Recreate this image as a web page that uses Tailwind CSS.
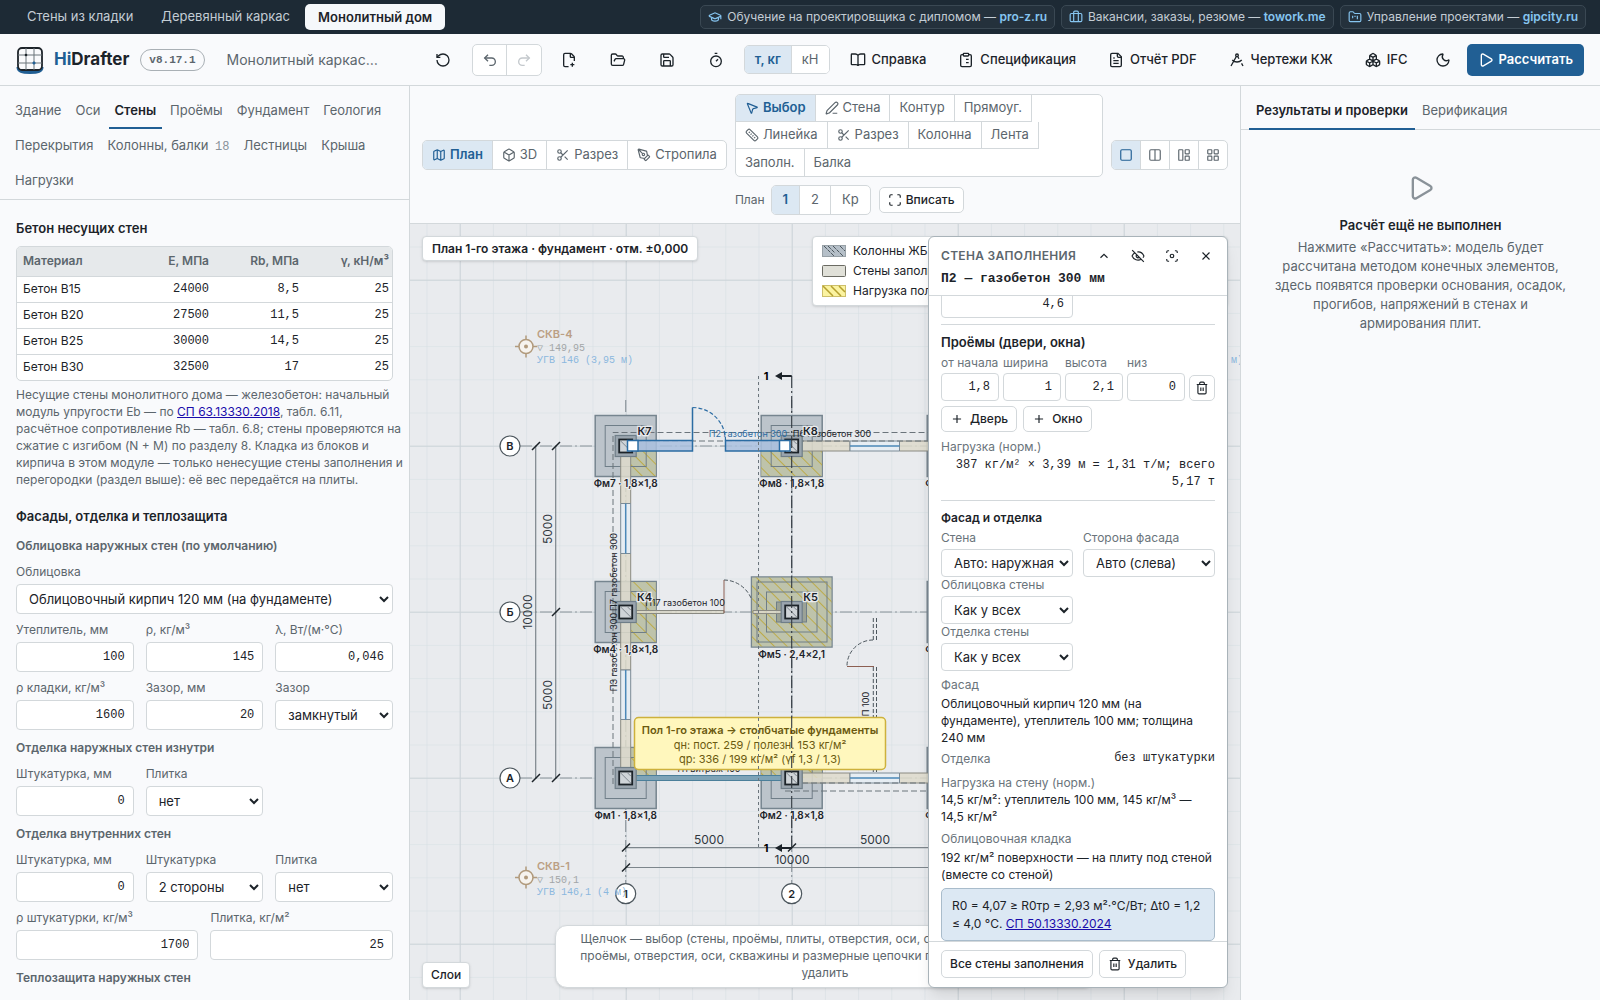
<!DOCTYPE html>
<html lang="ru">
<head>
<meta charset="utf-8">
<title>HiDrafter — Монолитный дом</title>
<script src="https://cdn.jsdelivr.net/npm/@tailwindcss/browser@4"></script>
</head>
<body class="h-screen flex flex-col overflow-hidden bg-[#f9fafc] font-['Inter','Noto_Sans',sans-serif] text-[13px] text-[#1c2329]">

<svg class="hidden" aria-hidden="true">
  <symbol id="rotate" viewBox="0 0 24 24"><path d="M3 12a9 9 0 1 0 9-9 9.75 9.75 0 0 0-6.74 2.74L3 8"/><path d="M3 3v5h5"/></symbol>
  <symbol id="undo" viewBox="0 0 24 24"><path d="M9 14 4 9l5-5"/><path d="M4 9h10.5a5.5 5.5 0 0 1 0 11H11"/></symbol>
  <symbol id="redo" viewBox="0 0 24 24"><path d="m15 14 5-5-5-5"/><path d="M20 9H9.500a5.500 5.500 0 0 0 0 11H13"/></symbol>
  <symbol id="filenew" viewBox="0 0 24 24"><path d="M11.350 22H6a2 2 0 0 1-2-2V4a2 2 0 0 1 2-2h8a2.400 2.400 0 0 1 1.706.706l3.588 3.588A2.400 2.400 0 0 1 20 8v5.350"/><path d="M14 2v5a1 1 0 0 0 1 1h5M14 19h6M17 16v6"/></symbol>
  <symbol id="folder" viewBox="0 0 24 24"><path d="m6 14 1.500-2.900A2 2 0 0 1 9.240 10H20a2 2 0 0 1 1.940 2.500l-1.540 6a2 2 0 0 1-1.950 1.500H4a2 2 0 0 1-2-2V5a2 2 0 0 1 2-2h3.900a2 2 0 0 1 1.690.9l.81 1.200a2 2 0 0 0 1.670.9H18a2 2 0 0 1 2 2v2"/></symbol>
  <symbol id="save" viewBox="0 0 24 24"><path d="M15.200 3a2 2 0 0 1 1.400.6l3.800 3.800a2 2 0 0 1 .6 1.400V19a2 2 0 0 1-2 2H5a2 2 0 0 1-2-2V5a2 2 0 0 1 2-2z"/><path d="M17 21v-7a1 1 0 0 0-1-1H8a1 1 0 0 0-1 1v7M7 3v4a1 1 0 0 0 1 1h7"/></symbol>
  <symbol id="timer" viewBox="0 0 24 24"><path d="M10 2h4M12 14l3-3"/><circle cx="12" cy="14" r="8"/></symbol>
  <symbol id="book" viewBox="0 0 24 24"><path d="M12 5v16M12 5c-1-1.300-2-2-4-2H3a1 1 0 0 0-1 1v14a1 1 0 0 0 1 1h6c2 0 3 1 3 2 0-1 1-2 3-2h6a1 1 0 0 0 1-1V4a1 1 0 0 0-1-1h-5c-2 0-3 .7-4 2"/></symbol>
  <symbol id="clipboard" viewBox="0 0 24 24"><rect x="8" y="2" width="8" height="4" rx="1"/><path d="M16 4h2a2 2 0 0 1 2 2v14a2 2 0 0 1-2 2H6a2 2 0 0 1-2-2V6a2 2 0 0 1 2-2h2M12 11h4M12 16h4M8 11h.01M8 16h.01"/></symbol>
  <symbol id="filetext" viewBox="0 0 24 24"><path d="M15 2H6a2 2 0 0 0-2 2v16a2 2 0 0 0 2 2h12a2 2 0 0 0 2-2V7Z"/><path d="M14 2v4a2 2 0 0 0 2 2h4M10 9H8M16 13H8M16 17H8"/></symbol>
  <symbol id="compass" viewBox="0 0 24 24"><path d="m12.990 6.740 1.930 3.440M19.136 12a10 10 0 0 1-14.271 0M21 21l-2.160-3.840M3 21l8.020-14.260"/><circle cx="12" cy="5" r="2"/></symbol>
  <symbol id="boxes" viewBox="0 0 24 24"><path d="M2.970 12.920A2 2 0 0 0 2 14.630v3.240a2 2 0 0 0 .97 1.710l3 1.800a2 2 0 0 0 2.060 0L12 19v-5.500l-5-3-4.030 2.420ZM7 16.500l-4.740-2.850M7 16.500l5-3M7 16.500v5.170M12 13.500V19l3.970 2.380a2 2 0 0 0 2.060 0l3-1.800a2 2 0 0 0 .97-1.710v-3.240a2 2 0 0 0-.97-1.710L17 10.500l-5 3ZM17 16.500l-5-3M17 16.500l4.740-2.850M17 16.500v5.170M7.970 4.420A2 2 0 0 0 7 6.130v4.370l5 3 5-3V6.130a2 2 0 0 0-.97-1.710l-3-1.800a2 2 0 0 0-2.060 0l-3 1.800ZM12 8 7.260 5.150M12 8l4.740-2.850M12 13.500V8"/></symbol>
  <symbol id="moon" viewBox="0 0 24 24"><path d="M20.985 12.486a9 9 0 1 1-9.473-9.472c.405-.022.617.46.402.803a6 6 0 0 0 8.268 8.268c.344-.215.825-.004.803.401"/></symbol>
  <symbol id="play" viewBox="0 0 24 24"><path d="M5 5a2 2 0 0 1 3.008-1.728l11.997 6.998a2 2 0 0 1 .003 3.458l-12 7A2 2 0 0 1 5 19z"/></symbol>
  <symbol id="map" viewBox="0 0 24 24"><path d="M14.106 5.553a2 2 0 0 0 1.788 0l3.659-1.830A1 1 0 0 1 21 4.619v12.764a1 1 0 0 1-.553.894l-4.553 2.277a2 2 0 0 1-1.788 0l-4.212-2.106a2 2 0 0 0-1.788 0l-3.659 1.830A1 1 0 0 1 3 19.381V6.618a1 1 0 0 1 .553-.894l4.553-2.277a2 2 0 0 1 1.788 0zM15 5.764v15M9 3.236v15"/></symbol>
  <symbol id="box" viewBox="0 0 24 24"><path d="M21 8a2 2 0 0 0-1-1.730l-7-4a2 2 0 0 0-2 0l-7 4A2 2 0 0 0 3 8v8a2 2 0 0 0 1 1.730l7 4a2 2 0 0 0 2 0l7-4A2 2 0 0 0 21 16ZM3.300 7l8.700 5 8.700-5M12 22V12"/></symbol>
  <symbol id="scissors" viewBox="0 0 24 24"><circle cx="6" cy="6" r="3"/><circle cx="6" cy="18" r="3"/><path d="M8.120 8.120 12 12M20 4 8.120 15.880M14.800 14.800 20 20"/></symbol>
  <symbol id="pentool" viewBox="0 0 24 24"><path d="M15.707 21.293a1 1 0 0 1-1.414 0l-1.586-1.586a1 1 0 0 1 0-1.414l5.586-5.586a1 1 0 0 1 1.414 0l1.586 1.586a1 1 0 0 1 0 1.414zM18 13l-1.375-6.874a1 1 0 0 0-.746-.776L3.235 2.028a1 1 0 0 0-1.207 1.207L5.350 15.879a1 1 0 0 0 .776.746L13 18M2.300 2.300l7.286 7.286"/><circle cx="11" cy="11" r="2"/></symbol>
  <symbol id="pointer" viewBox="0 0 24 24"><path d="M4.037 4.688a.495.495 0 0 1 .651-.651l16 6.500a.5.500 0 0 1-.063.947l-6.124 1.580a2 2 0 0 0-1.438 1.435l-1.579 6.126a.5.500 0 0 1-.947.063z"/></symbol>
  <symbol id="pencil" viewBox="0 0 24 24"><path d="M13 21h8M21.174 6.812a1 1 0 0 0-3.986-3.987L3.842 16.174a2 2 0 0 0-.5.830l-1.321 4.352a.5.500 0 0 0 .623.622l4.353-1.320a2 2 0 0 0 .830-.497z"/></symbol>
  <symbol id="ruler" viewBox="0 0 24 24"><path d="M8.700 2.700a2.400 2.400 0 0 0-3.400 0L2.700 5.300a2.400 2.400 0 0 0 0 3.400l12.600 12.600a2.400 2.400 0 0 0 3.400 0l2.600-2.600a2.400 2.400 0 0 0 0-3.400ZM9.500 11.500l2-2M12.500 14.500l2-2M6.500 8.500l2-2M15.500 17.500l2-2"/></symbol>
  <symbol id="fit" viewBox="0 0 24 24"><path d="M8 3H5a2 2 0 0 0-2 2v3M21 8V5a2 2 0 0 0-2-2h-3M3 16v3a2 2 0 0 0 2 2h3M16 21h3a2 2 0 0 0 2-2v-3"/></symbol>
  <symbol id="focus" viewBox="0 0 24 24"><circle cx="12" cy="12" r="3"/><path d="M3 7V5a2 2 0 0 1 2-2h2M17 3h2a2 2 0 0 1 2 2v2M21 17v2a2 2 0 0 1-2 2h-2M7 21H5a2 2 0 0 1-2-2v-2"/></symbol>
  <symbol id="one" viewBox="0 0 24 24"><rect x="3" y="3" width="18" height="18" rx="2"/></symbol>
  <symbol id="two" viewBox="0 0 24 24"><rect x="3" y="3" width="18" height="18" rx="2"/><path d="M12 3v18"/></symbol>
  <symbol id="three" viewBox="0 0 24 24"><rect x="3" y="3" width="7" height="18" rx="1"/><rect x="14" y="3" width="7" height="7" rx="1"/><rect x="14" y="14" width="7" height="7" rx="1"/></symbol>
  <symbol id="four" viewBox="0 0 24 24"><rect x="3" y="3" width="7" height="7" rx="1"/><rect x="14" y="3" width="7" height="7" rx="1"/><rect x="14" y="14" width="7" height="7" rx="1"/><rect x="3" y="14" width="7" height="7" rx="1"/></symbol>
  <symbol id="cap" viewBox="0 0 24 24"><path d="M21.420 10.922a1 1 0 0 0-.019-1.838L12.830 5.180a2 2 0 0 0-1.660 0L2.600 9.080a1 1 0 0 0 0 1.832l8.570 3.908a2 2 0 0 0 1.660 0zM22 10v6M6 12.500V16a6 3 0 0 0 12 0v-3.500"/></symbol>
  <symbol id="case" viewBox="0 0 24 24"><path d="M16 20V4a2 2 0 0 0-2-2h-4a2 2 0 0 0-2 2v16"/><rect x="2" y="6" width="20" height="14" rx="2"/></symbol>
  <symbol id="kanban" viewBox="0 0 24 24"><path d="M4 20h16a2 2 0 0 0 2-2V8a2 2 0 0 0-2-2h-7.930a2 2 0 0 1-1.660-.9l-.82-1.200A2 2 0 0 0 7.930 3H4a2 2 0 0 0-2 2v13c0 1.100.9 2 2 2ZM8 10v4M12 10v2M16 10v6"/></symbol>
  <symbol id="up" viewBox="0 0 24 24"><path d="m18 15-6-6-6 6"/></symbol>
  <symbol id="eyeoff" viewBox="0 0 24 24"><path d="M10.733 5.076a10.744 10.744 0 0 1 11.205 6.575 1 1 0 0 1 0 .696 10.747 10.747 0 0 1-1.444 2.490M14.084 14.158a3 3 0 0 1-4.242-4.242M17.479 17.499a10.750 10.750 0 0 1-15.417-5.151 1 1 0 0 1 0-.696 10.750 10.750 0 0 1 4.446-5.143M2 2l20 20"/></symbol>
  <symbol id="close" viewBox="0 0 24 24"><path d="M18 6 6 18M6 6l12 12"/></symbol>
  <symbol id="plus" viewBox="0 0 24 24"><path d="M5 12h14M12 5v14"/></symbol>
  <symbol id="trash" viewBox="0 0 24 24"><path d="M10 11v6M14 11v6M19 6v14a2 2 0 0 1-2 2H7a2 2 0 0 1-2-2V6M3 6h18M8 6V4a2 2 0 0 1 2-2h4a2 2 0 0 1 2 2v2"/></symbol>
</svg>

<!-- module switcher -->
<nav class="h-[34px] shrink-0 flex items-center justify-between bg-[#1d2a35] px-[14px] text-[#c3ccd4]">
  <div class="flex items-center h-[26px] gap-[2px]">
    <a href="#" class="px-[13px]">Стены из кладки</a>
    <a href="#" class="px-[13px]">Деревянный каркас</a>
    <a href="#" class="px-[13px] h-[26px] leading-[26px] rounded-[5px] bg-[#f5f8fb] font-semibold text-[#1c2329]">Монолитный дом</a>
  </div>
  <div class="flex items-center gap-[6px] text-[12px] [&>a]:h-6 [&>a]:flex [&>a]:items-center [&>a]:gap-[5px] [&>a]:px-[7px] [&>a]:rounded-[5px] [&>a]:border [&>a]:border-[#3a4853] [&>a]:bg-[#24313c] [&_b]:font-semibold [&_b]:text-[#86c5f0] [&_svg]:size-[14px] [&_svg]:text-[#86c5f0]">
    <a href="#"><svg class="fill-none stroke-current stroke-2"><use href="#cap"/></svg><span>Обучение на проектировщика с дипломом — <b>pro-z.ru</b></span></a>
    <a href="#"><svg class="fill-none stroke-current stroke-2"><use href="#case"/></svg><span>Вакансии, заказы, резюме — <b>towork.me</b></span></a>
    <a href="#"><svg class="fill-none stroke-current stroke-2"><use href="#kanban"/></svg><span>Управление проектами — <b>gipcity.ru</b></span></a>
  </div>
</nav>

<!-- application header -->
<header class="h-[52px] shrink-0 flex items-center justify-between border-b border-[#d3d8db] pl-4 pr-4 [&_svg]:size-4 [&_svg]:fill-none [&_svg]:stroke-current [&_svg]:stroke-2 [&_button]:shrink-0">
  <div class="flex items-center">
    <svg class="size-7!" viewBox="0 0 28 28"><path d="M2 21c0 4.500 4 5.500 12 5.500S26 25.500 26 21" stroke="#215f94" stroke-width="3"/><rect x="2" y="2" width="24" height="22" rx="4" fill="#f9fafc" stroke="#1c2329" stroke-width="1.800"/><path d="M10 2v22M18 2v22M2 9h24M2 17h24" stroke="#6b747b" stroke-width="1"/><circle cx="10" cy="9" r="1.300" fill="#1c2329" stroke="none"/><circle cx="18" cy="17" r="1.300" fill="#215f94" stroke="#215f94" stroke-width=".5"/></svg>
    <span class="ml-[10px] text-[17px] font-bold"><span class="text-[#215f94]">Hi</span>Drafter</span>
    <span class="ml-[11px] h-[22px] leading-5 px-2 rounded-full border border-[#a9b0b5] font-['Liberation_Mono',monospace] text-[11px] font-bold text-[#5c666d]">v8.17.1</span>
    <span class="ml-[22px] text-[14px] text-[#5c666d]">Монолитный каркас…</span>
  </div>
  <div class="flex items-center">
    <button class="w-8 h-8 grid place-items-center" aria-label="Сброс"><svg><use href="#rotate"/></svg></button>
    <div class="ml-[13px] mr-[11px] h-8 w-[70px] flex rounded-[5px] border border-[#d3d8db] bg-white">
      <button class="flex-1 grid place-items-center border-r border-[#d3d8db] text-[#5c666d]" aria-label="Отменить"><svg><use href="#undo"/></svg></button>
      <button class="flex-1 grid place-items-center text-[#c3c8cc]" aria-label="Повторить"><svg><use href="#redo"/></svg></button>
    </div>
    <div class="flex gap-[17px]">
      <button class="w-8 h-8 grid place-items-center" aria-label="Новый"><svg><use href="#filenew"/></svg></button>
      <button class="w-8 h-8 grid place-items-center" aria-label="Открыть"><svg><use href="#folder"/></svg></button>
      <button class="w-8 h-8 grid place-items-center" aria-label="Сохранить"><svg><use href="#save"/></svg></button>
      <button class="w-8 h-8 grid place-items-center" aria-label="Таймер"><svg><use href="#timer"/></svg></button>
    </div>
    <div class="ml-3 h-[29px] flex rounded-[5px] border border-[#d3d8db] overflow-hidden">
      <button class="px-[10px] bg-[#dce8f3] font-semibold text-[#215f94] border-r border-[#d3d8db]">т, кг</button>
      <button class="px-[10px] bg-white text-[#5c666d]">кН</button>
    </div>
    <div class="flex items-center ml-5 gap-8 font-medium [&>button]:flex [&>button]:items-center [&>button]:gap-[6px]">
      <button><svg><use href="#book"/></svg>Справка</button>
      <button><svg><use href="#clipboard"/></svg>Спецификация</button>
      <button><svg><use href="#filetext"/></svg>Отчёт PDF</button>
      <button><svg><use href="#compass"/></svg>Чертежи КЖ</button>
      <button><svg><use href="#boxes"/></svg>IFC</button>
    </div>
    <button class="ml-5 w-8 h-8 grid place-items-center" aria-label="Тёмная тема"><svg><use href="#moon"/></svg></button>
    <button class="ml-2 h-8 px-[11px] flex items-center gap-1 rounded-[5px] bg-[#215f94] font-semibold text-white"><svg><use href="#play"/></svg>Рассчитать</button>
  </div>
</header>

<main class="flex-1 min-h-0 flex">

<!-- left: model parameters -->
<aside class="w-[410px] shrink-0 flex flex-col border-r border-[#d3d8db]">
  <nav class="h-[114px] shrink-0 flex flex-wrap content-start pl-[9px] pt-2 border-b border-[#d3d8db] text-[#5c666d] [&>a]:h-[35px] [&>a]:px-[6px] [&>a]:leading-[33px] [&>a]:mr-[2px]">
    <a href="#">Здание</a><a href="#">Оси</a><a href="#" class="border-b-2 border-[#215f94] font-semibold text-[#1c2329]">Стены</a><a href="#">Проёмы</a><a href="#">Фундамент</a><a href="#">Геология</a>
    <a href="#">Перекрытия</a><a href="#">Колонны, балки <span class="ml-[3px] font-['Liberation_Mono',monospace] text-[12px] text-[#89929a]">18</span></a><a href="#">Лестницы</a><a href="#">Крыша</a>
    <a href="#">Нагрузки</a>
  </nav>
  <div class="flex-1 min-h-0 overflow-hidden px-4 pt-[19px] text-[12px] text-[#5c666d] [&_h2]:text-[13px] [&_h2]:leading-[18px] [&_h2]:font-semibold [&_h2]:text-[#1c2329] [&_h3]:mt-[9px] [&_h3]:mb-[1px] [&_h3]:leading-[18px] [&_h3]:font-semibold [&_label]:block [&_label]:leading-[17px] [&_label]:mb-1 [&_input]:h-[30px] [&_input]:w-full [&_input]:px-2 [&_input]:bg-white [&_input]:border [&_input]:border-[#d3d8db] [&_input]:rounded-[4px] [&_input]:text-right [&_input]:font-['Liberation_Mono',monospace] [&_input]:text-[#1c2329] [&_select]:h-[30px] [&_select]:w-full [&_select]:px-2 [&_select]:bg-white [&_select]:border [&_select]:border-[#d3d8db] [&_select]:rounded-[4px] [&_select]:text-[13px] [&_select]:text-[#1c2329]">
    <h2>Бетон несущих стен</h2>
    <div class="mt-[9px] rounded-[5px] border border-[#d3d8db] overflow-hidden bg-white">
      <table class="w-full table-fixed text-right text-[#1c2329] [&_th]:h-[29px] [&_th]:p-0 [&_th]:pr-[3px] [&_th]:font-semibold [&_th]:text-[#5c666d] [&_td]:h-[26px] [&_td]:p-0 [&_td]:pr-[3px] [&_td]:border-t [&_td]:border-[#d3d8db] [&_td]:font-['Liberation_Mono',monospace] [&_tr>:first-child]:text-left [&_tr>:first-child]:pl-[6px] [&_tr>:first-child]:font-['Inter','Noto_Sans',sans-serif]">
        <thead class="bg-[#e6e9eb]"><tr><th class="w-[102px]">Материал</th><th class="w-[93px]">E, МПа</th><th class="w-[90px]">Rb, МПа</th><th>γ, кН/м³</th></tr></thead>
        <tbody>
          <tr><td>Бетон B15</td><td>24000</td><td>8,5</td><td>25</td></tr>
          <tr><td>Бетон B20</td><td>27500</td><td>11,5</td><td>25</td></tr>
          <tr><td>Бетон B25</td><td>30000</td><td>14,5</td><td>25</td></tr>
          <tr><td>Бетон B30</td><td>32500</td><td>17</td><td>25</td></tr>
        </tbody>
      </table>
    </div>
    <p class="mt-[5px] leading-[17px] whitespace-nowrap">Несущие стены монолитного дома — железобетон: начальный<br>модуль упругости Eb — по <a href="#" class="text-[#1a0dab] underline">СП 63.13330.2018</a>, табл. 6.11,<br>расчётное сопротивление Rb — табл. 6.8; стены проверяются на<br>сжатие с изгибом (N + M) по разделу 8. Кладка из блоков и<br>кирпича в этом модуле — только ненесущие стены заполнения и<br>перегородки (раздел выше): её вес передаётся на плиты.</p>
    <h2 class="mt-[19px]">Фасады, отделка и теплозащита</h2>
    <h3 class="mt-3!">Облицовка наружных стен (по умолчанию)</h3>
    <div class="grid grid-cols-6 gap-x-3">
      <div class="mt-[7px] col-span-6"><label for="clad">Облицовка</label><select id="clad"><option>Облицовочный кирпич 120 мм (на фундаменте)</option></select></div>
      <div class="mt-[7px] col-span-2"><label for="ins">Утеплитель, мм</label><input id="ins" value="100"></div>
      <div class="mt-[7px] col-span-2"><label for="rho">ρ, кг/м³</label><input id="rho" value="145"></div>
      <div class="mt-[7px] col-span-2"><label for="lam">λ, Вт/(м·°С)</label><input id="lam" value="0,046"></div>
      <div class="mt-[7px] col-span-2"><label for="rhok">ρ кладки, кг/м³</label><input id="rhok" value="1600"></div>
      <div class="mt-[7px] col-span-2"><label for="gap">Зазор, мм</label><input id="gap" value="20"></div>
      <div class="mt-[7px] col-span-2"><label for="gapt">Зазор</label><select id="gapt"><option>замкнутый</option></select></div>
    </div>
    <h3>Отделка наружных стен изнутри</h3>
    <div class="grid grid-cols-6 gap-x-3">
      <div class="mt-[7px] col-span-2"><label for="pl1">Штукатурка, мм</label><input id="pl1" value="0"></div>
      <div class="mt-[7px] col-span-2"><label for="ti1">Плитка</label><select id="ti1"><option>нет</option></select></div>
    </div>
    <h3>Отделка внутренних стен</h3>
    <div class="grid grid-cols-6 gap-x-3">
      <div class="mt-[7px] col-span-2"><label for="pl2">Штукатурка, мм</label><input id="pl2" value="0"></div>
      <div class="mt-[7px] col-span-2"><label for="pl3">Штукатурка</label><select id="pl3"><option>2 стороны</option></select></div>
      <div class="mt-[7px] col-span-2"><label for="ti2">Плитка</label><select id="ti2"><option>нет</option></select></div>
      <div class="mt-[7px] col-span-3"><label for="rhop">ρ штукатурки, кг/м³</label><input id="rhop" value="1700"></div>
      <div class="mt-[7px] col-span-3"><label for="tkg">Плитка, кг/м²</label><input id="tkg" value="25"></div>
    </div>
    <h3>Теплозащита наружных стен</h3>
  </div>
</aside>

<!-- centre: toolbar and plan -->
<section class="flex-1 min-w-0 flex flex-col">
  <div class="h-[138px] shrink-0 flex items-center gap-2 px-3 border-b border-[#d3d8db] text-[#5c666d] [&_svg]:size-[14px] [&_svg]:fill-none [&_svg]:stroke-current [&_svg]:stroke-2 [&_button]:flex [&_button]:items-center [&_button]:gap-1">
    <div class="h-[30px] shrink-0 flex rounded-[5px] border border-[#d3d8db] bg-white overflow-hidden [&>button]:px-[9px] [&>button+button]:border-l [&>button]:border-[#d3d8db]">
      <button class="bg-[#dce8f3] font-semibold text-[#215f94]"><svg><use href="#map"/></svg>План</button>
      <button><svg><use href="#box"/></svg>3D</button>
      <button><svg><use href="#scissors"/></svg>Разрез</button>
      <button><svg><use href="#pentool"/></svg>Стропила</button>
    </div>
    <div class="flex-1 min-w-0 flex flex-col gap-2">
      <div class="rounded-[5px] border border-[#d3d8db] bg-white overflow-hidden [&>div]:flex [&>div]:h-[27px] [&_button]:px-[9px] [&_button]:border-r [&_button]:border-b [&_button]:border-[#d3d8db]">
        <div><button class="bg-[#dce8f3] font-semibold text-[#215f94]"><svg><use href="#pointer"/></svg>Выбор</button><button><svg><use href="#pencil"/></svg>Стена</button><button>Контур</button><button>Прямоуг.</button></div>
        <div><button><svg><use href="#ruler"/></svg>Линейка</button><button><svg><use href="#scissors"/></svg>Разрез</button><button>Колонна</button><button>Лента</button></div>
        <div><button class="border-b-0!">Заполн.</button><button class="border-0!">Балка</button></div>
      </div>
      <div class="flex items-center">
        <span class="text-[12px] mr-[6px]">План</span>
        <div class="h-[30px] flex rounded-[5px] border border-[#d3d8db] bg-white overflow-hidden [&>button]:px-[11px] [&>button+button]:border-l [&>button]:border-[#d3d8db]">
          <button class="bg-[#dce8f3] font-semibold text-[#215f94]">1</button><button>2</button><button>Кр</button>
        </div>
        <button class="ml-2 h-[26px] px-2 rounded-[5px] border border-[#d3d8db] bg-white text-[12px] font-medium text-[#1c2329]"><svg><use href="#fit"/></svg>Вписать</button>
      </div>
    </div>
    <div class="h-[30px] w-[117px] shrink-0 flex rounded-[5px] border border-[#d3d8db] bg-white overflow-hidden [&>button]:flex-1 [&>button]:justify-center [&>button+button]:border-l [&>button]:border-[#d3d8db]">
      <button class="bg-[#dce8f3] text-[#215f94]" aria-label="Один вид"><svg><use href="#one"/></svg></button>
      <button aria-label="Два вида"><svg><use href="#two"/></svg></button>
      <button aria-label="Три вида"><svg><use href="#three"/></svg></button>
      <button aria-label="Четыре вида"><svg><use href="#four"/></svg></button>
    </div>
  </div>

  <div class="relative flex-1 min-h-0 overflow-hidden bg-[#e9ebee]">
    <svg class="absolute inset-0 size-full font-['Inter','Noto_Sans',sans-serif]" viewBox="410 224 830 776" preserveAspectRatio="xMidYMid slice">
      <defs>
        <pattern id="minor" x="459.7" y="279.7" width="33.2" height="33.2" patternUnits="userSpaceOnUse"><path d="M0 0H33.2M0 0V33.2" stroke="#d6dfe3" stroke-width="1.200" fill="none"/></pattern>
        <pattern id="major" x="459.7" y="279.7" width="166" height="166" patternUnits="userSpaceOnUse"><path d="M0 0H166M0 0V166" stroke="#cdd4d9" stroke-width="2" fill="none"/></pattern>
        <pattern id="load" width="9" height="9" patternUnits="userSpaceOnUse" patternTransform="rotate(-45)"><rect width="9" height="9" fill="#bfc2a0" fill-opacity=".75"/><path d="M0.500 0V9" stroke="#bcab4a" stroke-width="1"/></pattern>
        <g id="column"><rect x="-10.500" y="-10.500" width="21" height="21" fill="#9aa5ae" stroke="#6f7e88" stroke-width="1.200"/><rect x="-6.500" y="-6.500" width="13" height="13" fill="#cfd4d8" stroke="#1c2329" stroke-width="1.800"/><path d="M-5-5 5 5M2-5l3 3" stroke="#6b747b" stroke-width=".8"/></g>
        <g id="pad"><rect x="-30.500" y="-30.500" width="61" height="61" fill="#bcc4cb" stroke="#76858f" stroke-width="1.500"/></g>
        <g id="step" fill="none" stroke="#6f7e88" stroke-width="1"><rect x="-20.500" y="-20.500" width="41" height="41"/></g>
        <g id="well" fill="none" stroke="#b19a7c" stroke-width="1.500"><path d="M-11 0H11M0-11V11"/><circle r="7" fill="#f6f3ee"/><circle r="2" fill="#b19a7c" stroke="none"/></g>
      </defs>
      <rect x="410" y="224" width="830" height="776" fill="url(#minor)"/>
      <rect x="410" y="224" width="830" height="776" fill="url(#major)"/>

      <g stroke="#8f979d" stroke-width="1.200" stroke-dasharray="12 3 2 3">
        <path d="M520 446H960M520 612H960M520 778H960M625.700 400V884M791.700 400V884"/>
      </g>

      <!-- foundations -->
      <g>
        <use href="#pad" x="625.700" y="446"/><use href="#pad" x="791.700" y="446"/><use href="#pad" x="957.700" y="446"/>
        <use href="#pad" x="625.700" y="612"/><use href="#pad" x="957.700" y="612"/>
        <use href="#pad" x="625.700" y="778"/><use href="#pad" x="791.700" y="778"/><use href="#pad" x="957.700" y="778"/>
        <rect x="751.500" y="577" width="80.500" height="70" fill="#bcc4cb" stroke="#76858f" stroke-width="1.500"/>
        <g fill="url(#load)"><path d="M631 451h25v25h-25zM761 451h61v25h-61zM631 582h25v60h-25zM752 577.500h79.500v69H752zM631 748h25v30h-25zM761 748h61v30h-61z"/></g>
        <use href="#step" x="625.700" y="446"/><use href="#step" x="791.700" y="446"/><use href="#step" x="625.700" y="612"/><use href="#step" x="625.700" y="778"/><use href="#step" x="791.700" y="778"/>
        <g fill="none" stroke="#6f7e88"><rect x="757" y="582" width="70" height="60"/><rect x="766.500" y="592" width="50.500" height="40"/><rect x="776.500" y="602" width="30" height="20" fill="#9ba296"/></g>
      </g>

      <!-- infill walls -->
      <g fill="#dedacb" fill-opacity=".85" stroke="#8a8a82">
        <path d="M620.700 451h10v52.500h-10zM620.700 553.500h10v50h-10zM620.700 622h10v48h-10zM620.700 719.500h10v50h-10z"/>
        <path d="M802 441h48v10h-48zM899.500 441H932v10h-32.500zM802 773h48v10h-48zM899.500 773H932v10h-32.500zM636 610.500h88v3h-88zM753 610.500h32v3h-32z"/>
      </g>
      <g fill="#e6edf3" stroke="#7c8b96"><path d="M620.700 503.500h10v50h-10zM620.700 670h10v49.500h-10zM850 441h49.500v10H850zM850 773h49.500v10H850z"/><path d="M625.700 503.500v50M625.700 670v49.500M850 446h49.500M850 778h49.500" stroke="#4b88b8" stroke-width="1.500"/></g>
      <path d="M634 775.500h151v5H634z" fill="#7ea3b7" stroke="#4b7f9a"/>
      <g fill="none" stroke="#6b747b" stroke-dasharray="6 3"><path d="M613 784V432.500H932M618 441H932M802 783h130M785 791H932" /></g>
      <g fill="none" stroke="#4c565d" stroke-dasharray="4 2"><path d="M873.300 618v22M876.500 618v22M873.300 667v105M876.500 667v105"/><path d="M873 640a26 26 0 0 0-26 26M724 580a30 30 0 0 1 27 18"/></g>
      <path d="M847 666.500h27M724 580v33" stroke="#8c5f52" fill="none"/>

      <!-- selected wall -->
      <g fill="#a9bfde" fill-opacity=".85" stroke="#2b6ca3" stroke-width="1.500"><path d="M634 440.500h58.500V451H634zM725.500 440.500H785V451h-59.500z"/></g>
      <path d="M692.500 441v-33.500" stroke="#2b6ca3" stroke-width="1.500"/><path d="M692.500 407.500a33 33 0 0 1 33 33" stroke="#2b6ca3" stroke-width="1.200" stroke-dasharray="4 2" fill="none"/>
      <use href="#column" x="625.700" y="446"/><use href="#column" x="791.700" y="446"/><use href="#column" x="625.700" y="612"/><use href="#column" x="791.700" y="612"/><use href="#column" x="625.700" y="778"/><use href="#column" x="791.700" y="778"/>
      <g fill="#fff" stroke="#2b6ca3" stroke-width="1.500"><rect x="627.500" y="440.500" width="10.500" height="10.500"/><rect x="779.500" y="440.500" width="10.500" height="10.500"/></g>

      <!-- wall captions -->
      <g font-size="9" fill="#1c2329" text-anchor="middle">
        <text x="748" y="437" fill="#2b6ca3">П2 газобетон 300</text><text x="832" y="437">П6 газобетон 300</text>
        <text x="685" y="606">П17 газобетон 100</text><text x="709" y="772">П1 витраж 100</text>
        <text transform="translate(617 572) rotate(-90)">П7 газобетон 300</text><text transform="translate(617 652) rotate(-90)">П3 газобетон 300</text>
        <text transform="translate(869 704) rotate(-90)">П 100</text>
      </g>
      <g font-size="11" font-weight="600" fill="#1c2329" text-anchor="middle" stroke="#e9ebee" stroke-width="2.500" paint-order="stroke">
        <text x="644.500" y="434.500">К7</text><text x="810.500" y="434.500">К8</text><text x="644.500" y="600.500">К4</text><text x="810.500" y="600.500">К5</text>
      </g>
      <g font-size="10" font-weight="600" fill="#1c2329" text-anchor="middle" stroke="#e9ebee" stroke-width="2" paint-order="stroke">
        <text x="625.700" y="487">Фм7 · 1,8×1,8</text><text x="791.700" y="487">Фм8 · 1,8×1,8</text><text x="957.700" y="487">Фм9 · 1,8×1,8</text>
        <text x="625.700" y="653">Фм4 · 1,8×1,8</text><text x="791.700" y="658">Фм5 · 2,4×2,1</text><text x="957.700" y="653">Фм6 · 1,8×1,8</text>
        <text x="625.700" y="819">Фм1 · 1,8×1,8</text><text x="791.700" y="819">Фм2 · 1,8×1,8</text><text x="957.700" y="819">Фм3 · 1,8×1,8</text>
      </g>

      <!-- floor load note -->
      <rect x="634.500" y="717.500" width="251" height="52" rx="4" fill="#fff7bd" stroke="#cdb13c" stroke-width="1.500"/>
      <g text-anchor="middle" fill="#6b5a10" font-size="11"><text x="760" y="734" font-weight="600">Пол 1-го этажа → столбчатые фундаменты</text><text x="760" y="749">qн: пост. 259 / полезн. 153 кг/м²</text><text x="760" y="763">qр: 336 / 199 кг/м² (γf 1,3 / 1,3)</text></g>

      <!-- dimension chains -->
      <g stroke="#7d868c" stroke-width="1.200"><path d="M535.700 446V778M555.700 446V778M625.700 847.700H932M625.700 867.500H932"/></g>
      <g stroke="#1c2329" stroke-width="1.500"><path d="m532 450 8-8M532 782l8-8M552 450l8-8M552 616l8-8M552 782l8-8M622 851.500l8-8M788 851.500l8-8M622 871.500l8-8"/></g>
      <g font-size="12" fill="#30383e" text-anchor="middle"><text x="709" y="844">5000</text><text x="875" y="844">5000</text><text x="792" y="864">10000</text><text transform="translate(552 529) rotate(-90)">5000</text><text transform="translate(552 695) rotate(-90)">5000</text><text transform="translate(532 612) rotate(-90)">10000</text></g>

      <!-- section mark -->
      <path d="M791.700 376V848" stroke="#30383e" stroke-width="1.100" stroke-dasharray="12 3 2 3"/><path d="M758.500 376V848" stroke="#6b747b" stroke-dasharray="3 3"/>
      <path d="M791.700 376H782M791.700 848H782" stroke="#1c2329" stroke-width="2"/><path d="m775 376 7-4v8zM775 848l7-4v8z" fill="#1c2329"/>
      <g font-size="11" font-weight="700" text-anchor="middle"><text x="766" y="380">1</text><text x="766" y="852">1</text></g>

      <!-- axis bubbles -->
      <g fill="#fff" stroke="#4c565d" stroke-width="1.200"><circle cx="510" cy="446" r="10"/><circle cx="510" cy="612" r="10"/><circle cx="510" cy="778" r="10"/><circle cx="625.700" cy="893.700" r="10"/><circle cx="791.700" cy="893.700" r="10"/></g>
      <g font-size="11" font-weight="600" fill="#1c2329" text-anchor="middle"><text x="510" y="450">В</text><text x="510" y="616">Б</text><text x="510" y="782">А</text><text x="625.700" y="898">1</text><text x="791.700" y="898">2</text></g>

      <!-- boreholes -->
      <use href="#well" x="526" y="346.500"/><use href="#well" x="526" y="877.500"/>
      <g font-size="11" font-weight="600" fill="#bb9f84"><text x="537" y="338">СКВ-4</text><text x="537" y="870">СКВ-1</text></g>
      <g class="font-['Liberation_Mono',monospace]" font-size="10" fill="#a3a6a8"><text x="537" y="351">▽ 149,95</text><text x="537" y="883">▽ 150,1</text><g fill="#8cb8de"><text x="537" y="363">УГВ 146 (3,95 м)</text><text x="537" y="895">УГВ 146,1 (4 м)</text><text x="1231" y="363">м)</text></g></g>
    </svg>

    <div class="absolute left-3 top-3 h-[25px] leading-[23px] px-[9px] rounded-[4px] border border-[#d3d8db] bg-white text-[12px] font-semibold shadow-sm">План 1-го этажа · фундамент · отм. ±0,000</div>
    <ul class="absolute right-3 top-3 w-[416px] h-[70px] flex flex-col justify-center gap-1 px-[9px] rounded-[4px] border border-[#d3d8db] bg-white text-[12px] leading-4 shadow-sm [&>li]:flex [&>li]:items-center [&>li]:gap-[7px] [&_svg]:w-6 [&_svg]:h-3">
      <li><svg viewBox="0 0 24 12"><rect x=".5" y=".5" width="23" height="11" fill="#b5bfc8" stroke="#98a1a7"/><path d="m2 1 10 10M11 1l10 10M6 1l7 7M18 1l5 5" stroke="#4c565d" stroke-dasharray="4 1"/></svg>Колонны ЖБ</li>
      <li><svg viewBox="0 0 24 12"><rect x=".5" y=".5" width="23" height="11" rx="1" fill="#e0e0d8" stroke="#6b6b63"/></svg>Стены заполнения</li>
      <li><svg viewBox="0 0 24 12"><rect x=".5" y=".5" width="23" height="11" fill="#fbf3a0" stroke="#cdbf6a"/><path d="m1 1 10 10M9 1l10 10M17 1l6 6" stroke="#b5a030" stroke-width="1.500"/></svg>Нагрузка пола</li>
    </ul>
    <button class="absolute left-3 bottom-3 h-[26px] px-2 rounded-[4px] border border-[#d3d8db] bg-white text-[12px] font-medium shadow-sm">Слои</button>
    <p class="absolute left-1/2 -translate-x-1/2 bottom-3 w-[540px] h-[63px] pt-1 rounded-xl border border-[#d3d8db] bg-white text-center text-[12px] leading-[17px] whitespace-nowrap text-[#5c666d] shadow-sm">Щелчок — выбор (стены, проёмы, плиты, отверстия, оси, скважины), рамка — гр.;<br>проёмы, отверстия, оси, скважины и размерные цепочки перетаскиваются; Del —<br>удалить</p>

    <!-- properties of the selected wall -->
    <div class="absolute right-3 top-3 bottom-3 w-[300px] flex flex-col rounded-md border border-[#a9b3b9] bg-white shadow-lg text-[12px] [&_svg]:size-[14px] [&_svg]:fill-none [&_svg]:stroke-current [&_svg]:stroke-2">
      <div class="h-[59px] shrink-0 px-3 pt-[7px] border-b border-[#d3d8db]">
        <div class="flex items-center h-6">
          <span class="flex-1 font-semibold text-[#5c666d] tracking-wide">СТЕНА ЗАПОЛНЕНИЯ</span>
          <div class="flex -mr-1 gap-2 [&>button]:w-[26px] [&>button]:h-[26px] [&>button]:grid [&>button]:place-items-center"><button aria-label="Свернуть"><svg><use href="#up"/></svg></button><button aria-label="Скрыть"><svg><use href="#eyeoff"/></svg></button><button aria-label="Показать"><svg><use href="#focus"/></svg></button><button aria-label="Закрыть"><svg><use href="#close"/></svg></button></div>
        </div>
        <div class="mt-[2px] leading-[18px] text-[13px] font-bold font-['Liberation_Mono',monospace]">П2 — газобетон 300 мм</div>
      </div>
      <div class="flex-1 min-h-0 overflow-hidden px-3 [&_h2]:text-[12px] [&_h2]:leading-[18px] [&_h2]:font-semibold [&_label]:block [&_label]:leading-4 [&_label]:text-[#6a747b] [&_dt]:leading-[17px] [&_dt]:text-[#6a747b] [&_dd]:leading-[17px] [&_input]:w-full [&_input]:h-7 [&_input]:px-2 [&_input]:border [&_input]:border-[#d3d8db] [&_input]:rounded-[4px] [&_input]:text-right [&_input]:font-['Liberation_Mono',monospace] [&_select]:w-full [&_select]:h-7 [&_select]:pl-2 [&_select]:pr-0 [&_select]:border [&_select]:border-[#d3d8db] [&_select]:rounded-[4px] [&_select]:bg-white [&_select]:text-[13px]">
        <div class="w-[132px] -mt-[6px]"><input aria-label="Высота" value="4,6"></div>
        <h2 class="mt-[6px] pt-2 border-t border-[#d3d8db] text-[13px]!">Проёмы (двери, окна)</h2>
        <div class="mt-1 flex items-end gap-1">
          <div class="flex-1"><label for="o1" class="mb-[2px] text-[12px] whitespace-nowrap">от начала</label><input id="o1" value="1,8"></div>
          <div class="flex-1"><label for="o2" class="mb-[2px]">ширина</label><input id="o2" value="1"></div>
          <div class="flex-1"><label for="o3" class="mb-[2px]">высота</label><input id="o3" value="2,1"></div>
          <div class="flex-1"><label for="o4" class="mb-[2px]">низ</label><input id="o4" value="0"></div>
          <button class="w-[26px] h-[26px] grid place-items-center rounded-[5px] border border-[#d3d8db]" aria-label="Удалить проём"><svg><use href="#trash"/></svg></button>
        </div>
        <div class="mt-[5px] flex gap-[6px] font-medium [&>button]:h-[26px] [&>button]:px-2 [&>button]:flex [&>button]:items-center [&>button]:gap-[6px] [&>button]:rounded-[5px] [&>button]:border [&>button]:border-[#d3d8db]"><button><svg><use href="#plus"/></svg>Дверь</button><button><svg><use href="#plus"/></svg>Окно</button></div>
        <dl class="mt-[6px]"><dt>Нагрузка (норм.)</dt><dd class="mt-[2px] text-right font-['Liberation_Mono',monospace]">387 кг/м² × 3,39 м = 1,31 т/м; всего<br>5,17 т</dd></dl>
        <h2 class="mt-[9px] pt-2 border-t border-[#d3d8db]">Фасад и отделка</h2>
        <div class="mt-[3px] grid grid-cols-2 gap-x-[10px]">
          <div><label for="f1" class="mb-[3px]">Стена</label><select id="f1"><option>Авто: наружная</option></select></div>
          <div><label for="f2" class="mb-[3px]">Сторона фасада</label><select id="f2"><option>Авто (слева)</option></select></div>
          <div class="col-start-1"><label for="f3" class="mb-[3px]">Облицовка стены</label><select id="f3"><option>Как у всех</option></select></div>
          <div class="col-start-1"><label for="f4" class="mb-[3px]">Отделка стены</label><select id="f4"><option>Как у всех</option></select></div>
        </div>
        <dl>
          <dt class="mt-[5px]">Фасад</dt><dd class="mt-[2px]">Облицовочный кирпич 120 мм (на<br>фундаменте), утеплитель 100 мм; толщина<br>240 мм</dd>
          <div class="mt-1 flex justify-between"><dt>Отделка</dt><dd class="font-['Liberation_Mono',monospace]">без штукатурки</dd></div>
          <dt class="mt-[7px]">Нагрузка на стену (норм.)</dt><dd>14,5 кг/м²: утеплитель 100 мм, 145 кг/м³ —<br>14,5 кг/м²</dd>
          <dt class="mt-[5px]">Облицовочная кладка</dt><dd class="mt-[2px]">192 кг/м² поверхности — на плиту под стеной<br>(вместе со стеной)</dd>
        </dl>
        <p class="mt-[5px] h-[53px] px-[10px] pt-2 leading-[18px] whitespace-nowrap rounded-[5px] border border-[#a9bccb] bg-[#dce8f3]">R0 = 4,07 ≥ R0тр = 2,93 м²·°С/Вт; Δt0 = 1,2<br>≤ 4,0 °С. <a href="#" class="text-[#1a0dab] underline">СП 50.13330.2024</a></p>
      </div>
      <div class="h-[46px] shrink-0 flex items-start gap-[6px] px-3 pt-2 border-t border-[#d3d8db] font-medium [&>button]:h-7 [&>button]:px-2 [&>button]:flex [&>button]:items-center [&>button]:gap-[6px] [&>button]:rounded-[5px] [&>button]:border [&>button]:border-[#d3d8db]">
        <button>Все стены заполнения</button><button><svg><use href="#trash"/></svg>Удалить</button>
      </div>
    </div>
  </div>
</section>

<!-- right: results -->
<aside class="w-[360px] shrink-0 border-l border-[#d3d8db]">
  <nav class="h-11 flex pl-2 pt-[7px] border-b border-[#d3d8db] [&>a]:h-[37px] [&>a]:px-[7px] [&>a]:leading-[34px]"><a href="#" class="border-b-2 border-[#215f94] font-semibold">Результаты и проверки</a><a href="#" class="text-[#5c666d]">Верификация</a></nav>
  <div class="pt-11 flex flex-col items-center text-center text-[#5c666d]">
    <svg class="size-7 fill-none stroke-[#8a9299] stroke-2" viewBox="0 0 24 24"><use href="#play"/></svg>
    <h2 class="mt-[14px] leading-[18px] font-semibold text-[#1c2329]">Расчёт ещё не выполнен</h2>
    <p class="mt-1 leading-[19px] whitespace-nowrap">Нажмите «Рассчитать»: модель будет<br>рассчитана методом конечных элементов,<br>здесь появятся проверки основания, осадок,<br>прогибов, напряжений в стенах и<br>армирования плит.</p>
  </div>
</aside>
</main>
</body>
</html>
